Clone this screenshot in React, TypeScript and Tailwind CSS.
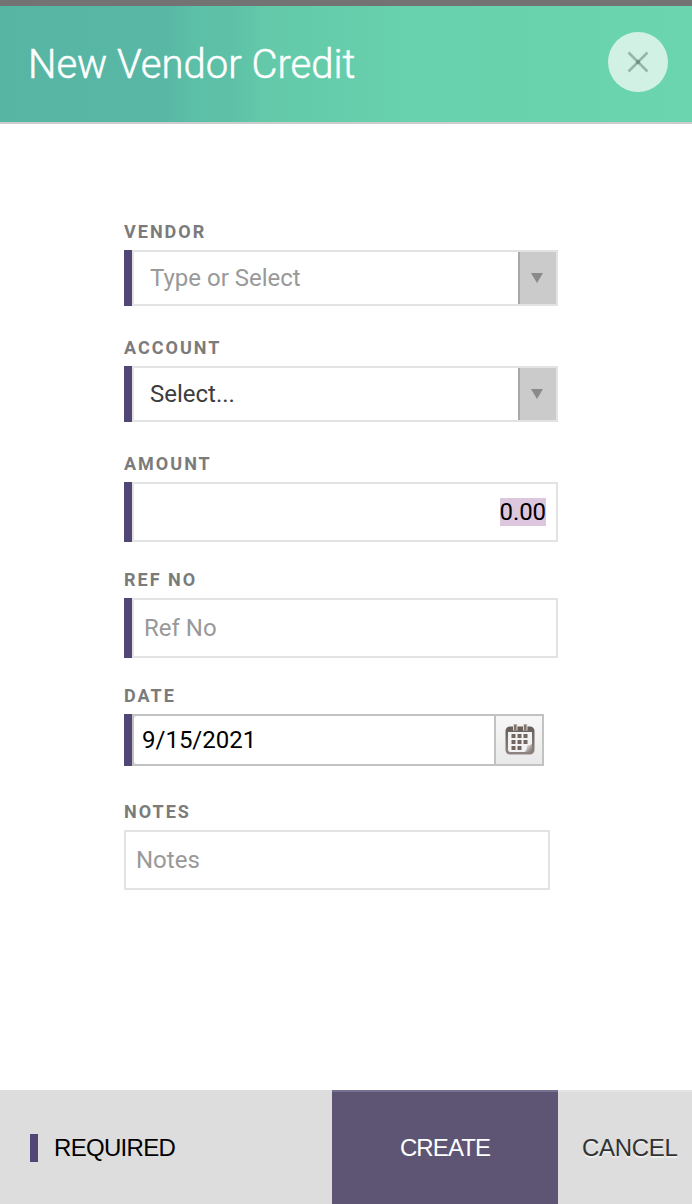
import React from "react";

interface FieldProps {
  label: string;
  required?: boolean;
  children: React.ReactNode;
}

function Field({ label, required, children }: FieldProps) {
  return (
    <div className="h-[116px]">
      <label className="block h-9 text-[18px] leading-[35px] font-bold tracking-[2px] text-[#7b7b7b]">
        {label}
      </label>
      <div className="flex">
        {required && <span className="w-2 shrink-0 bg-[#524674]"></span>}
        {children}
      </div>
    </div>
  );
}

function SelectBox({ text, textCls }: { text: string; textCls: string }) {
  return (
    <div className="flex h-14 w-[426px] border-2 border-[#e3e3e3] bg-white">
      <span className={`flex-1 pl-4 leading-[52px] ${textCls}`}>{text}</span>
      <button className="flex w-[38px] items-center justify-center border-l-2 border-[#a8a8a8] bg-[#cbcbcb] pr-0.5">
        <svg width="12" height="10" viewBox="0 0 12 10">
          <path d="M0 0h12L6 10z" fill="#8a8a8a" />
        </svg>
      </button>
    </div>
  );
}

function CalendarIcon() {
  return (
    <svg width="30" height="31" viewBox="0 0 30 31">
      <defs>
        <linearGradient id="frame" x1="0" y1="0" x2="0" y2="1">
          <stop offset="0" stopColor="#655c58" />
          <stop offset="1" stopColor="#8f8682" />
        </linearGradient>
        <linearGradient id="curl" x1="0" y1="0" x2="1" y2="1">
          <stop offset="0.3" stopColor="#d5d2d0" />
          <stop offset="0.8" stopColor="#8f8682" />
        </linearGradient>
      </defs>
      <rect x="0.5" y="2.5" width="29" height="28" rx="4.5" fill="url(#frame)" />
      <path d="M3 8h24v12l-7 8H5.500a2.500 2.500 0 0 1-2.500-2.500z" fill="#f3f2f2" />
      <path d="M27 19.500c-1 1.500-2.500 2-5 2 0 3-.5 5-2 6.500h4.500a2.500 2.500 0 0 0 2.500-2.500z" fill="url(#curl)" />
      {/* binder rings */}
      <path d="M8 0h4.500v6.500H8zM18 0h4.500v6.500H18z" fill="#dcd9d7" />
      <path d="M9 0.500h2.500v6H9zM19 0.500h2.500v6H19z" fill="#81746d" />
      {/* day cells */}
      <path
        d="M6.500 10h4v4h-4zM12.500 10h4v4h-4zM18.500 10h4v4h-4zM6.500 16h4v4h-4zM12.500 16h4v4h-4zM18.500 16h4v4h-4zM6.500 22h4v4h-4zM12.500 22h4v4h-4z"
        fill="#706561"
      />
    </svg>
  );
}

export default function App() {
  return (
    <div className="flex h-[1204px] w-[692px] flex-col overflow-hidden bg-white font-['Roboto',sans-serif] text-[24px]">
      {/* Header */}
      <header className="flex h-[124px] shrink-0 items-center justify-between border-t-[6px] border-b-2 border-t-[#737373] border-b-[#cccccc] bg-[linear-gradient(90deg,#57b6a3_0%,#58b8a5_24%,#5cbfa7_28%,#5dc0a7_33%,#63c9a9_38%,#68d1ad_60%,#6bd5af_100%)] pr-6 pl-7">
        <h1 className="pt-0.5 text-[40px] leading-[48px] font-light text-white [-webkit-text-stroke:0.5px_#ffffff]">
          New Vendor Credit
        </h1>
        <button className="mb-1 flex size-[60px] items-center justify-center rounded-full bg-[#d2f1e5]">
          <svg width="22" height="22" viewBox="0 0 22 22" fill="none">
            <path d="M1.500 1.500l19 19M20.500 1.500l-19 19" stroke="#98b5aa" strokeWidth="2.600" />
            <path d="M9.500 9.500l3 3M12.500 9.500l-3 3" stroke="#718d82" strokeWidth="2" />
          </svg>
        </button>
      </header>

      {/* Form */}
      <main className="flex-1 pt-[90px] pl-[124px]">
        <Field label="VENDOR" required>
          <SelectBox text="Type or Select" textCls="text-[#999999]" />
        </Field>
        <Field label="ACCOUNT" required>
          <SelectBox text="Select..." textCls="text-[#3d3d3d]" />
        </Field>
        <Field label="AMOUNT" required>
          <div className="flex h-[60px] w-[426px] items-center justify-end border-2 border-[#e3e3e3] pr-[10px]">
            <span className="bg-[#dcc7de] leading-[28px] tracking-[-0.1px] text-black">0.00</span>
          </div>
        </Field>
        <Field label="REF NO" required>
          <div className="h-[60px] w-[426px] border-2 border-[#e3e3e3] pl-[10px] leading-[56px] text-[#999999]">
            Ref No
          </div>
        </Field>
        <Field label="DATE" required>
          <div className="flex h-[52px] w-[412px] border-2 border-[#c2c2c2] bg-[#e3e3e3]">
            <span className="flex-1 rounded-l-[4px] bg-white pl-2 leading-[48px] text-black">9/15/2021</span>
            <button className="flex w-12 items-center justify-center border-l-2 border-[#c2c2c2] bg-linear-to-b from-[#f7f7f7] to-[#e9e9e9] pb-px pl-0.5">
              <CalendarIcon />
            </button>
          </div>
        </Field>
        <Field label="NOTES">
          <div className="h-[60px] w-[426px] border-2 border-[#e3e3e3] pl-[10px] leading-[56px] text-[#999999]">
            Notes
          </div>
        </Field>
      </main>

      {/* Footer actions */}
      <footer className="flex h-[114px] shrink-0 bg-[#dddddd] font-['Liberation_Sans',Arial,sans-serif] text-[24px] tracking-[-0.7px]">
        <div className="flex w-[332px] items-center pt-0.5 pl-[30px]">
          <span className="h-7 w-2 bg-[#524674]"></span>
          <span className="ml-4 text-black">REQUIRED</span>
        </div>
        <button className="w-[226px] border-t-2 border-[#767091] bg-[#5d5573] tracking-[-0.9px] text-white">CREATE</button>
        <button className="flex-1 border-t-2 border-[#e4e4e4] pl-6 text-left tracking-[-0.3px] text-[#333333] [text-shadow:0_2px_0_#eeeeee]">
          CANCEL
        </button>
      </footer>
    </div>
  );
}
